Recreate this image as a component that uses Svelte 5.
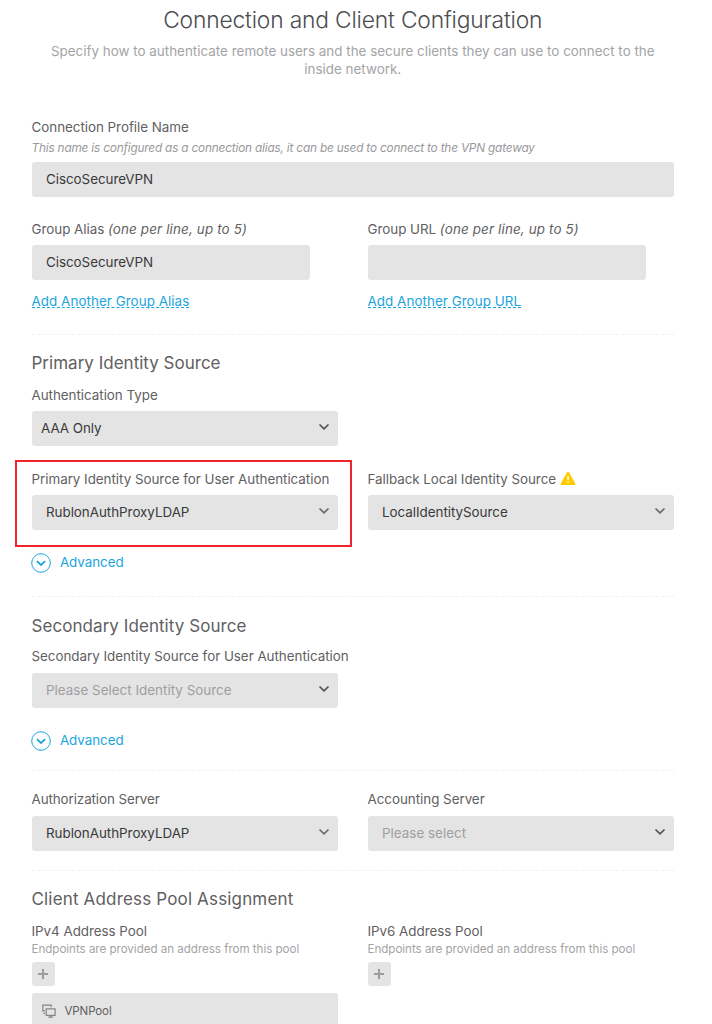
<script>
  const warning = 'M7.1 1.2a1.1 1.1 0 0 1 1.9 0l6.3 11.2a1.1 1.1 0 0 1-.95 1.65H1.75A1.1 1.1 0 0 1 .8 12.4z';
</script>

{#snippet chevron()}
  <svg class="chevron" viewBox="0 0 12 8" width="12" height="8">
    <path d="M1.5 1.5 6 5.8l4.5-4.3" />
  </svg>
{/snippet}

{#snippet select(text, kind = '')}
  <div class="field select {kind}">
    <span>{text}</span>
    {@render chevron()}
  </div>
{/snippet}

{#snippet advanced()}
  <div class="advanced">
    <svg viewBox="0 0 20 20" width="20" height="20">
      <circle cx="10" cy="10" r="9.3" />
      <path d="M5.9 8.2 10 12l4.1-3.8" />
    </svg>
    <span>Advanced</span>
  </div>
{/snippet}

{#snippet plus()}
  <div class="plus">
    <svg viewBox="0 0 12 12" width="12" height="12"><path d="M6 1v10M1 6h10" /></svg>
  </div>
{/snippet}

<main>
  <h1>Connection and Client Configuration</h1>
  <p class="subtitle">
    Specify how to authenticate remote users and the secure clients they can use to connect to the<br />inside network.
  </p>

  <section class="profile">
    <div class="label">Connection Profile Name</div>
    <div class="hint italic">This name is configured as a connection alias, it can be used to connect to the VPN gateway</div>
    <div class="field name"><span>CiscoSecureVPN</span></div>

    <div class="columns groups">
      <div>
        <div class="label">Group Alias <em>(one per line, up to 5)</em></div>
        <div class="field short"><span>CiscoSecureVPN</span></div>
        <span class="link">Add Another Group Alias</span>
      </div>
      <div>
        <div class="label">Group URL <em>(one per line, up to 5)</em></div>
        <div class="field short"></div>
        <span class="link">Add Another Group URL</span>
      </div>
    </div>
  </section>

  <section class="primary">
    <h2>Primary Identity Source</h2>
    <div class="columns first">
      <div>
        <div class="label">Authentication Type</div>
        {@render select('AAA Only', 'tight')}
      </div>
    </div>
    <div class="columns sources">
      <div class="marked">
        <div class="label">Primary Identity Source for User Authentication</div>
        {@render select('RublonAuthProxyLDAP', 'soft')}
        <div class="highlight"></div>
      </div>
      <div>
        <div class="label with-icon">
          <span class="fallback">Fallback Local Identity Source</span>
          <svg viewBox="0 0 16 15" width="16" height="15">
            <path d={warning} fill="#ffcc00" />
            <path d="M8.05 5v4.2M8.05 10.6v1.3" stroke="#fff" stroke-width="1.4" />
          </svg>
        </div>
        {@render select('LocalIdentitySource', 'soft')}
      </div>
    </div>
    {@render advanced()}
  </section>

  <section class="secondary">
    <h2>Secondary Identity Source</h2>
    <div class="columns first">
      <div>
        <div class="label">Secondary Identity Source for User Authentication</div>
        {@render select('Please Select Identity Source', 'placeholder')}
      </div>
    </div>
    {@render advanced()}
  </section>

  <section class="servers">
    <div class="columns">
      <div>
        <div class="label authorization">Authorization Server</div>
        {@render select('RublonAuthProxyLDAP', 'soft')}
      </div>
      <div>
        <div class="label">Accounting Server</div>
        {@render select('Please select', 'placeholder')}
      </div>
    </div>
  </section>

  <section class="pools">
    <h2>Client Address Pool Assignment</h2>
    <div class="columns first">
      <div>
        <div class="label">IPv4 Address Pool</div>
        <div class="hint">Endpoints are provided an address from this pool</div>
        {@render plus()}
        <div class="pool">
          <svg viewBox="0 0 14 14" width="14" height="14">
            <path d="M3 6.8H.8V1.1h8.4v2.1M1.2 9.3H3" />
            <path d="M4.2 4.9h8.9v6.4H4.2zM8.65 11.3v1.7M6.3 13.1H11" />
          </svg>
          <span>VPNPool</span>
        </div>
      </div>
      <div>
        <div class="label">IPv6 Address Pool</div>
        <div class="hint">Endpoints are provided an address from this pool</div>
        {@render plus()}
      </div>
    </div>
  </section>
</main>

<style>
  :global(body) {
    background: #fff;
  }
  main {
    box-sizing: border-box;
    width: 712px;
    height: 1024px;
    overflow: hidden;
    padding: 8px 38px 0 31.5px;
    font: 13.4px/18px Inter, 'Liberation Sans', sans-serif;
    letter-spacing: -0.03px;
    color: #5f6062;
  }
  h1 {
    margin: 0;
    text-align: center;
    font-size: 22.8px;
    line-height: 24px;
    font-weight: 300;
    letter-spacing: -0.17px;
    color: #4c4d4f;
  }
  .subtitle {
    margin: 11px 0 40px;
    text-align: center;
    line-height: 17.5px;
    white-space: nowrap;
    letter-spacing: 0.015px;
    color: #a3a4a6;
  }
  h2 {
    margin: 0;
    font-size: 17px;
    line-height: 20px;
    font-weight: 400;
    letter-spacing: 0.01px;
  }
  .secondary h2 {
    letter-spacing: 0.06px;
  }
  .pools h2 {
    letter-spacing: 0.165px;
  }
  section + section {
    border-top: 1px dashed #f1f1f2;
  }
  .profile {
    padding-bottom: 26px;
  }
  .primary {
    padding: 18px 0 23px;
  }
  .secondary {
    padding: 19px 0;
  }
  .servers {
    padding: 19px 0;
  }
  .pools {
    padding-top: 18px;
  }
  .columns {
    display: grid;
    grid-template-columns: 306.5px 306.5px;
    column-gap: 29.5px;
  }
  .first {
    margin-top: 13px;
  }
  .secondary .first {
    margin-top: 11px;
  }
  .groups {
    margin-top: 23px;
  }
  .sources {
    margin-top: 24px;
  }
  .label {
    white-space: nowrap;
  }
  .label em {
    letter-spacing: 0.15px;
  }
  .authorization {
    letter-spacing: -0.09px;
  }
  .fallback {
    letter-spacing: -0.05px;
  }
  .with-icon {
    display: flex;
    align-items: center;
    gap: 4px;
  }
  .with-icon svg {
    margin-top: -2px;
  }
  .hint {
    margin-top: 1px;
    font-size: 11.6px;
    line-height: 16px;
    color: #a3a4a6;
    white-space: nowrap;
  }
  .hint.italic {
    margin-top: 4px;
    font-size: 11.8px;
    font-style: italic;
    letter-spacing: -0.18px;
    color: #98999b;
  }
  .field {
    box-sizing: border-box;
    display: flex;
    align-items: center;
    justify-content: space-between;
    height: 35px;
    margin-top: 7px;
    padding: 0 8.5px 2px 14.5px;
    border-radius: 3px;
    background: #e4e4e4;
    color: #39393b;
  }
  .field.name {
    margin-top: 6px;
  }
  .secondary .field,
  .servers .field {
    margin-top: 8px;
  }
  .short {
    width: 278.5px;
  }
  .tight {
    padding-left: 9.5px;
  }
  .placeholder span {
    color: #9e9fa1;
    letter-spacing: 0.02px;
  }
  .chevron {
    margin-top: -1px;
    fill: none;
    stroke: #505153;
    stroke-width: 1.7;
  }
  .soft .chevron {
    stroke: #69696b;
  }
  .link {
    display: block;
    width: max-content;
    margin-top: 15px;
    line-height: 12px;
    border-bottom: 1px dashed #1ba4dc;
    letter-spacing: 0.055px;
    color: #1ba4dc;
  }
  .marked {
    position: relative;
  }
  .highlight {
    position: absolute;
    top: -10px;
    left: -16.5px;
    width: 333px;
    height: 83px;
    border: 2px solid #f0242c;
  }
  .advanced {
    display: flex;
    align-items: center;
    gap: 9px;
    height: 20px;
    margin: 23px 0 0 -0.6px;
    color: #1ba4dc;
  }
  .advanced span {
    margin-top: -2px;
    letter-spacing: -0.05px;
  }
  .advanced svg {
    fill: none;
    stroke: #1ba4dc;
    stroke-width: 1;
  }
  .advanced path {
    stroke-width: 1.8;
  }
  .plus {
    display: grid;
    place-items: center;
    width: 23px;
    height: 24px;
    margin-top: 5px;
    border-radius: 3px;
    background: #e4e4e4;
  }
  .plus path {
    stroke: #9b9c9e;
    stroke-width: 2.1;
  }
  .pool {
    box-sizing: border-box;
    display: flex;
    align-items: center;
    gap: 8.5px;
    height: 35px;
    margin-top: 7px;
    padding-left: 10.5px;
    border-radius: 3px;
    background: #e4e4e4;
    font-size: 11.5px;
    letter-spacing: -0.1px;
  }
  .pool svg {
    fill: none;
    stroke: #858688;
    stroke-width: 1.2;
  }
</style>
